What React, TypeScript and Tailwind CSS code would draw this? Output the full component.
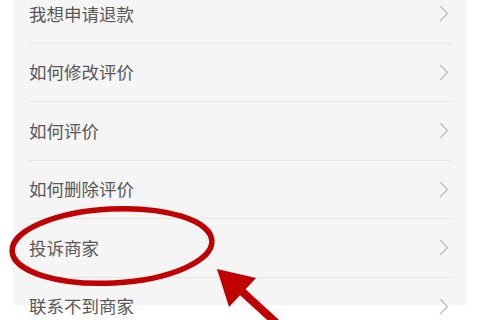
const items = ["我想申请退款", "如何修改评价", "如何评价", "如何删除评价", "投诉商家", "联系不到商家"];

function Chevron() {
  return (
    <svg width="10" height="17" viewBox="0 0 10 17" fill="none" aria-hidden="true">
      <path d="M1.5 1.5 8.5 8.5 1.5 15.5" stroke="#c2c2c2" strokeWidth="1.5" strokeLinecap="round" strokeLinejoin="round" />
    </svg>
  );
}

export default function App() {
  return (
    <div
      className="relative h-[320px] w-[480px] overflow-hidden bg-white"
      style={{ fontFamily: '"Noto Sans CJK SC", "Noto Sans", sans-serif' }}
    >
      <div className="mx-[13px] h-full bg-[#f5f5f5]">
        <ul className="-mt-[15px] pl-[15px] pr-[16px]">
          {items.map((label) => (
            <li
              key={label}
              className="flex h-[58.5px] items-center justify-between border-b border-[#e6e6e6] pl-px pr-[2px]"
            >
              <span className="text-[17.5px] text-[#585858]">{label}</span>
              <Chevron />
            </li>
          ))}
        </ul>
      </div>

      {/* red marker drawn over the list */}
      <svg className="pointer-events-none absolute inset-0" width="480" height="320" viewBox="0 0 480 320">
        <ellipse
          cx="112"
          cy="246"
          rx="100"
          ry="37"
          transform="rotate(-3 112 246)"
          fill="none"
          stroke="#c00000"
          strokeWidth="5.5"
        />
        <line x1="236" y1="286" x2="284" y2="330" stroke="#c00000" strokeWidth="8" />
        <polygon points="217,269 256,278 229,307" fill="#c00000" />
      </svg>
    </div>
  );
}
